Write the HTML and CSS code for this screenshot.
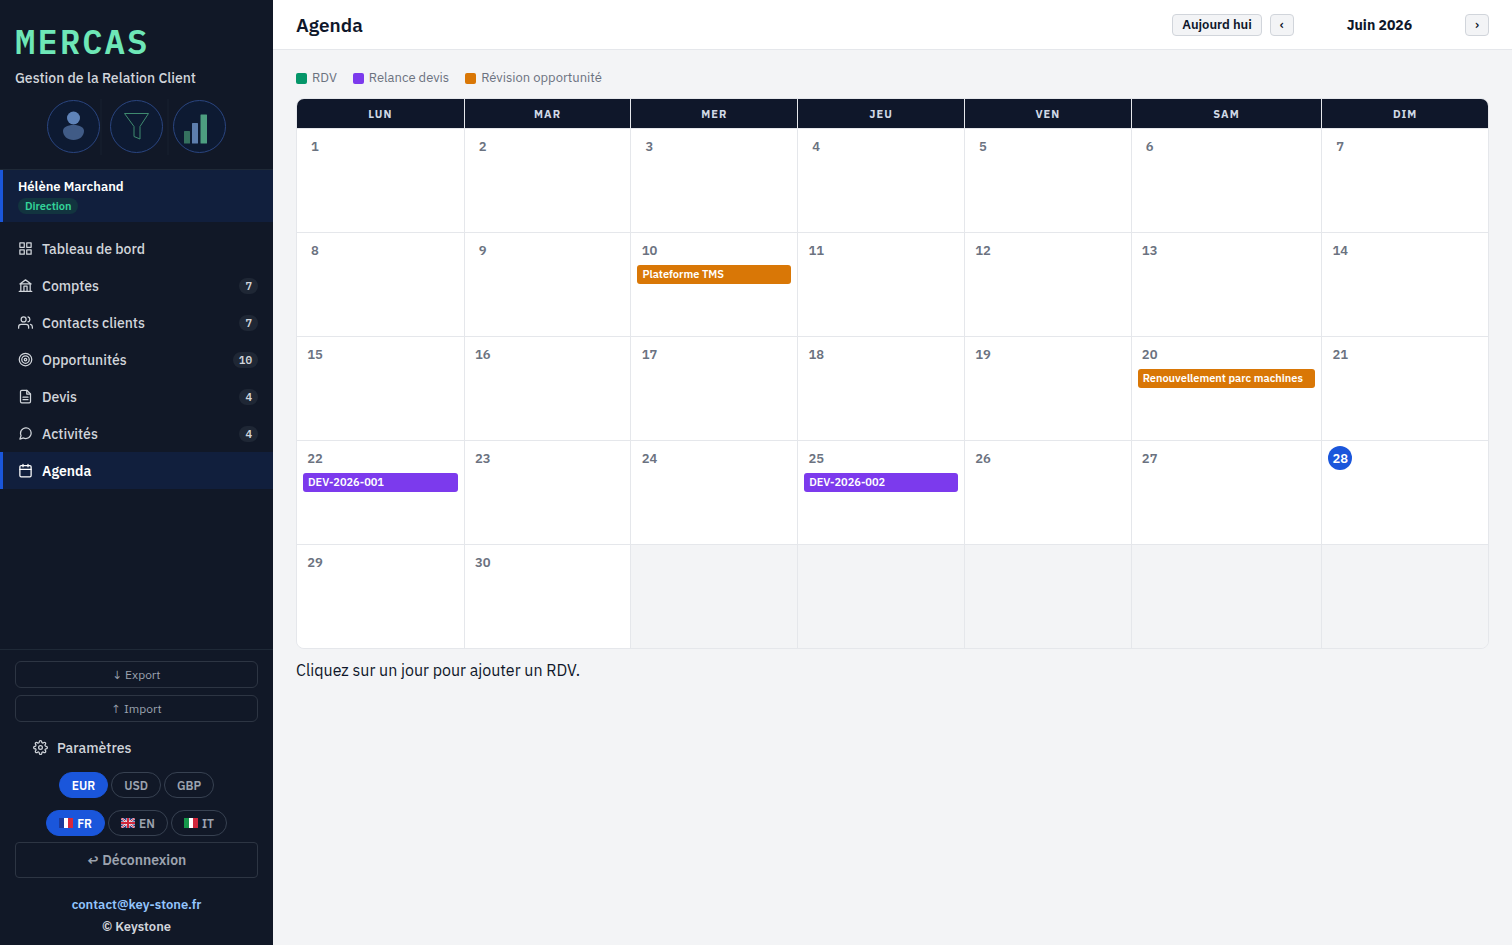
FILE: index.html
```html
<!DOCTYPE html>
<html lang="fr">
<head>
  <meta charset="UTF-8" />
  <meta name="viewport" content="width=device-width, initial-scale=1" />
  <title>MERCAS - Agenda</title>
  <link rel="stylesheet" href="styles.css">
</head>
<body>

  <!-- Sidebar -->
  <aside class="sidebar">
    <div class="brand">
      <div class="brand-name">MERCAS</div>
      <div class="brand-sub">Gestion de la Relation Client</div>
      <svg class="brand-art" width="181" height="56" viewBox="0 0 181 56" aria-hidden="true">
        <path d="M55 0v56M122 0v56" stroke="#192131"/>
        <g fill="#0d1a32" stroke="#2a4580">
          <circle cx="27.500" cy="27.500" r="26"/>
          <circle cx="90.500" cy="27.500" r="26"/>
          <circle cx="153.500" cy="27.500" r="26"/>
        </g>
        <path d="M17 32c0-3.500 4-6 10.500-6S38 28.500 38 32c0 5-4.500 9-10.500 9S17 37 17 32z" fill="#405b86"/>
        <circle cx="27.500" cy="19" r="6.500" fill="#5f83b8"/>
        <path d="M78.500 14.500h24L94 27.500v12.500l-6-2.500v-10z" fill="none" stroke="#3f8a6f"/>
        <rect x="138" y="32" width="6" height="12.500" rx="0.500" fill="#35715f"/>
        <rect x="146" y="24" width="6" height="20.500" rx="0.500" fill="#5d7eae"/>
        <rect x="154.500" y="15.500" width="6.500" height="29" rx="0.500" fill="#4d9e80"/>
      </svg>
    </div>

    <div class="user">
      <div class="user-name">Hélène Marchand</div>
      <span class="user-role">Direction</span>
    </div>

    <nav class="nav">
      <a class="nav-item" href="#dashboard">
        <svg class="icon" viewBox="0 0 24 24"><rect x="3" y="3" width="7" height="7"/><rect x="14" y="3" width="7" height="7"/><rect x="3" y="14" width="7" height="7"/><rect x="14" y="14" width="7" height="7"/></svg>
        Tableau de bord
      </a>
      <a class="nav-item" href="#comptes">
        <svg class="icon" viewBox="0 0 24 24"><path d="M2 21.500h20M3 9.500h18L12 3zM4.500 10v11M19.500 10v11M9.500 21v-8h5v8"/></svg>
        Comptes <span class="count">7</span>
      </a>
      <a class="nav-item" href="#contacts">
        <svg class="icon" viewBox="0 0 24 24"><path d="M17 21v-2a4 4 0 0 0-4-4H5a4 4 0 0 0-4 4v2"/><circle cx="9" cy="7" r="4"/><path d="M23 21v-2a4 4 0 0 0-3-3.870M16 3.130a4 4 0 0 1 0 7.750"/></svg>
        Contacts clients <span class="count">7</span>
      </a>
      <a class="nav-item" href="#opportunites">
        <svg class="icon" viewBox="0 0 24 24"><circle cx="12" cy="12" r="10"/><circle cx="12" cy="12" r="6"/><circle cx="12" cy="12" r="2"/></svg>
        Opportunités <span class="count">10</span>
      </a>
      <a class="nav-item" href="#devis">
        <svg class="icon" viewBox="0 0 24 24"><path d="M14 2H6a2 2 0 0 0-2 2v16a2 2 0 0 0 2 2h12a2 2 0 0 0 2-2V8z"/><path d="M14 2v6h6M16 13H8M16 17H8"/></svg>
        Devis <span class="count">4</span>
      </a>
      <a class="nav-item" href="#activites">
        <svg class="icon" viewBox="0 0 24 24"><path d="M21 11.500a8.380 8.380 0 0 1-.9 3.800 8.500 8.500 0 0 1-7.600 4.700 8.380 8.380 0 0 1-3.800-.9L3 21l1.900-5.700a8.380 8.380 0 0 1-.9-3.800 8.500 8.500 0 0 1 4.700-7.600 8.380 8.380 0 0 1 3.800-.9h.5a8.480 8.480 0 0 1 8 8v.5z"/></svg>
        Activités <span class="count">4</span>
      </a>
      <a class="nav-item active" href="#agenda">
        <svg class="icon" viewBox="0 0 24 24"><rect x="3" y="4" width="18" height="18" rx="2"/><path d="M16 2v4M8 2v4M3 10h18"/></svg>
        Agenda
      </a>
    </nav>

    <div class="side-footer">
      <button class="side-btn">↓ Export</button>
      <button class="side-btn">↑ Import</button>
      <a class="settings" href="#parametres">
        <svg class="icon" viewBox="0 0 24 24"><circle cx="12" cy="12" r="3"/><path d="M19.400 15a1.650 1.650 0 0 0 .33 1.820l.06.06a2 2 0 1 1-2.830 2.830l-.06-.06a1.650 1.650 0 0 0-2.800 1.170V21a2 2 0 0 1-4 0v-.09A1.650 1.650 0 0 0 7.200 19.700l-.06.06a2 2 0 1 1-2.830-2.830l.06-.06A1.650 1.650 0 0 0 3.200 14H3a2 2 0 0 1 0-4h.09A1.650 1.650 0 0 0 4.300 7.200l-.06-.06a2 2 0 1 1 2.830-2.830l.06.06A1.650 1.650 0 0 0 10 3.200V3a2 2 0 0 1 4 0v.09a1.650 1.650 0 0 0 2.800 1.210l.06-.06a2 2 0 1 1 2.830 2.830l-.06.06A1.650 1.650 0 0 0 20.800 10H21a2 2 0 0 1 0 4h-.09a1.650 1.650 0 0 0-1.510 1z"/></svg>
        Paramètres
      </a>
      <div class="pills">
        <button class="pill active">EUR</button>
        <button class="pill">USD</button>
        <button class="pill">GBP</button>
      </div>
      <div class="pills">
        <button class="pill active">
          <svg class="flag" viewBox="0 0 14 10"><path fill="#fff" d="M0 0h14v10H0z"/><path fill="#1b3a9c" d="M0 0h5v10H0z"/><path fill="#d8283a" d="M9 0h5v10H9z"/></svg>
          FR
        </button>
        <button class="pill">
          <svg class="flag" viewBox="0 0 14 10"><path fill="#26347c" d="M0 0h14v10H0z"/><path d="M0 0l14 10M14 0L0 10" stroke="#fff" stroke-width="2"/><path d="M0 0l14 10M14 0L0 10" stroke="#d0273c"/><path d="M7 0v10M0 5h14" stroke="#fff" stroke-width="3"/><path d="M7 0v10M0 5h14" stroke="#d0273c" stroke-width="2"/></svg>
          EN
        </button>
        <button class="pill">
          <svg class="flag" viewBox="0 0 14 10"><path fill="#fff" d="M0 0h14v10H0z"/><path fill="#16974b" d="M0 0h5v10H0z"/><path fill="#d0273c" d="M9 0h5v10H9z"/></svg>
          IT
        </button>
      </div>
      <button class="logout">↩ Déconnexion</button>
      <div class="credits">
        <a href="mailto:contact@key-stone.fr">contact@key-stone.fr</a>
        <span>© Keystone</span>
      </div>
    </div>
  </aside>

  <!-- Agenda -->
  <main class="main">
    <header class="topbar">
      <h1>Agenda</h1>
      <div class="month-nav">
        <button class="btn">Aujourd hui</button>
        <button class="btn" aria-label="Mois précédent">‹</button>
        <span class="month">Juin 2026</span>
        <button class="btn" aria-label="Mois suivant">›</button>
      </div>
    </header>

    <div class="content">
      <div class="legend">
        <span class="legend-item"><i class="swatch rdv"></i>RDV</span>
        <span class="legend-item"><i class="swatch relance"></i>Relance devis</span>
        <span class="legend-item"><i class="swatch revision"></i>Révision opportunité</span>
      </div>

      <div class="calendar">
        <table>
          <thead>
            <tr><th>LUN</th><th>MAR</th><th>MER</th><th>JEU</th><th>VEN</th><th class="wide">SAM</th><th>DIM</th></tr>
          </thead>
          <tbody>
            <tr>
              <td><span class="day">1</span></td>
              <td><span class="day">2</span></td>
              <td><span class="day">3</span></td>
              <td><span class="day">4</span></td>
              <td><span class="day">5</span></td>
              <td><span class="day">6</span></td>
              <td><span class="day">7</span></td>
            </tr>
            <tr>
              <td><span class="day">8</span></td>
              <td><span class="day">9</span></td>
              <td><span class="day">10</span><div class="event revision">Plateforme TMS</div></td>
              <td><span class="day">11</span></td>
              <td><span class="day">12</span></td>
              <td><span class="day">13</span></td>
              <td><span class="day">14</span></td>
            </tr>
            <tr>
              <td><span class="day">15</span></td>
              <td><span class="day">16</span></td>
              <td><span class="day">17</span></td>
              <td><span class="day">18</span></td>
              <td><span class="day">19</span></td>
              <td><span class="day">20</span><div class="event revision">Renouvellement parc machines</div></td>
              <td><span class="day">21</span></td>
            </tr>
            <tr>
              <td><span class="day">22</span><div class="event relance">DEV-2026-001</div></td>
              <td><span class="day">23</span></td>
              <td><span class="day">24</span></td>
              <td><span class="day">25</span><div class="event relance">DEV-2026-002</div></td>
              <td><span class="day">26</span></td>
              <td><span class="day">27</span></td>
              <td><span class="day today">28</span></td>
            </tr>
            <tr>
              <td><span class="day">29</span></td>
              <td><span class="day">30</span></td>
              <td class="empty"></td>
              <td class="empty"></td>
              <td class="empty"></td>
              <td class="empty"></td>
              <td class="empty"></td>
            </tr>
          </tbody>
        </table>
      </div>
      <p class="hint">Cliquez sur un jour pour ajouter un RDV.</p>
    </div>
  </main>

</body>
</html>
```
FILE: styles.css
```css
* {
  box-sizing: border-box;
}
body {
  margin: 0;
  display: flex;
  min-height: 100vh;
  font-family: "IBM Plex Sans", "Noto Sans", sans-serif;
  font-size: 14px;
  color: #0f172a;
  background: #f3f4f6;
}
button {
  font-family: inherit;
  cursor: pointer;
}
a {
  text-decoration: none;
}

/* Sidebar */
.sidebar {
  width: 273px;
  flex-shrink: 0;
  display: flex;
  flex-direction: column;
  background: #111827;
  color: #d1d5db;
}
.brand {
  display: flex;
  flex-direction: column;
  padding: 20px 15px 14px;
  border-bottom: 1px solid #1f2937;
}
.brand-name {
  font-family: "IBM Plex Mono", "DejaVu Sans Mono", monospace;
  font-size: 34px;
  line-height: 42px;
  font-weight: 600;
  letter-spacing: 2px;
  color: #6ee7b7;
}
.brand-sub {
  line-height: 20px;
  margin: 6px 0 11px;
  font-weight: 500;
}
.brand-art {
  align-self: center;
}
.user {
  padding: 7px 15px;
  line-height: 20px;
  border-left: 3px solid #1a56db;
  background: #111f3d;
}
.user-name {
  font-size: 13px;
  font-weight: 600;
  color: #fff;
}
.user-role {
  display: block;
  width: max-content;
  padding: 0 7px;
  margin: 1px 0;
  font-size: 11px;
  line-height: 16px;
  font-weight: 600;
  color: #34d399;
  background: #12343f;
  border-radius: 8px;
}
.nav {
  padding-top: 8px;
}
.nav-item {
  display: flex;
  align-items: center;
  gap: 9px;
  height: 37px;
  padding: 0 15px;
  border-left: 3px solid transparent;
  font-weight: 500;
  color: #d1d5db;
}
.nav-item.active {
  color: #fff;
  font-weight: 600;
  background: #111f3d;
  border-left-color: #1a56db;
}
.icon {
  width: 15px;
  height: 15px;
  fill: none;
  stroke: currentColor;
  stroke-width: 2;
  stroke-linecap: round;
  stroke-linejoin: round;
}
.count {
  margin-left: auto;
  padding: 0 6px;
  font-family: "IBM Plex Mono", "Liberation Mono", monospace;
  font-size: 11px;
  line-height: 16px;
  font-weight: 600;
  background: #1f2735;
  border-radius: 8px;
}

.side-footer {
  margin-top: auto;
  padding: 11px 15px 7px;
  border-top: 1px solid #1f2937;
}
.side-btn,
.logout {
  display: block;
  width: 100%;
  height: 27px;
  margin-bottom: 7px;
  font-size: 12px;
  line-height: 16px;
  color: #9ca3af;
  background: transparent;
  border: 1px solid #2d3543;
  border-radius: 6px;
}
.logout {
  height: 36px;
  margin-bottom: 16px;
  font-size: 14px;
  font-weight: 600;
  border-radius: 4px;
}
.settings {
  display: flex;
  align-items: center;
  gap: 9px;
  height: 37px;
  padding-left: 18px;
  font-weight: 500;
  color: #d1d5db;
}
.pills {
  display: flex;
  justify-content: center;
  gap: 3px;
  padding: 6px 0;
}
.pill {
  display: flex;
  align-items: center;
  gap: 4px;
  height: 26px;
  padding: 0 12px;
  font-size: 12px;
  font-weight: 600;
  color: #9ca3af;
  background: transparent;
  border: 1px solid #374151;
  border-radius: 13px;
}
.pill.active {
  color: #fff;
  background: #1a56db;
  border-color: #1a56db;
}
.flag {
  width: 14px;
  height: 10px;
}
.credits {
  display: flex;
  flex-direction: column;
  align-items: center;
  font-size: 13px;
  line-height: 22px;
  font-weight: 600;
}
.credits a {
  color: #93c5fd;
}

/* Main area */
.main {
  flex: 1;
  min-width: 0;
}
.topbar {
  display: flex;
  align-items: center;
  justify-content: space-between;
  height: 50px;
  padding: 0 23px;
  background: #fff;
  border-bottom: 1px solid #e5e7eb;
}
h1 {
  margin: 0;
  font-size: 19px;
  line-height: 24px;
  font-weight: 600;
}
.month-nav {
  display: flex;
  align-items: center;
  gap: 8px;
}
.btn {
  height: 22px;
  padding: 0 9px;
  font-size: 13px;
  line-height: 18px;
  font-weight: 600;
  color: #0f172a;
  background: #f3f4f6;
  border: 1px solid #d1d5db;
  border-radius: 4px;
}
.month {
  min-width: 155px;
  text-align: center;
  font-weight: 700;
}
.content {
  padding: 18px 23px;
}
.legend {
  display: flex;
  gap: 16px;
  margin-bottom: 10px;
  font-size: 13px;
  line-height: 20px;
  color: #6b7280;
}
.legend-item {
  display: flex;
  align-items: center;
  gap: 5px;
}
.swatch {
  width: 11px;
  height: 11px;
  border-radius: 2px;
}
.rdv {
  background: #059669;
}
.relance {
  background: #7c3aed;
}
.revision {
  background: #d97706;
}

/* Month grid */
.calendar {
  border: 1px solid #e5e7eb;
  border-radius: 8px;
  overflow: hidden;
}
table {
  width: 100%;
  border-spacing: 0;
}
th {
  width: 14%;
  height: 30px;
  padding: 0;
  font-size: 11px;
  font-weight: 700;
  letter-spacing: 1px;
  color: #d1d9e6;
  background: #0f172a;
  border-bottom: 1px solid #e5e7eb;
}
th.wide {
  width: 16%;
}
td {
  height: 104px;
  padding: 5px 6px;
  vertical-align: top;
  background: #fff;
  border-bottom: 1px solid #e5e7eb;
}
th + th,
td + td {
  border-left: 1px solid #e5e7eb;
}
tbody tr:last-child td {
  height: 103px;
  border-bottom: 0;
}
td.empty {
  background: #f3f4f6;
}
.day {
  display: flex;
  align-items: center;
  justify-content: center;
  width: 24px;
  height: 24px;
  font-size: 13px;
  font-weight: 600;
  color: #6b7280;
  border-radius: 50%;
}
.day.today {
  color: #fff;
  background: #1a56db;
}
.event {
  margin-top: 3px;
  padding: 0 5px;
  font-size: 11px;
  line-height: 19px;
  font-weight: 600;
  white-space: nowrap;
  color: #fff;
  border-radius: 3px;
}
.hint {
  margin: 9px 0 0;
  font-size: 16px;
  line-height: 24px;
}
```
